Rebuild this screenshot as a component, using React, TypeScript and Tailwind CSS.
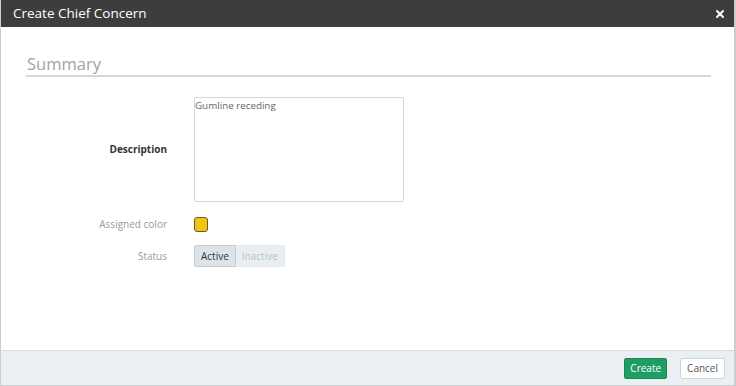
import { X } from "lucide-react";

export default function App() {
  return (
    <div
      className="w-[736px] h-[386px] flex flex-col bg-white border-l border-r-2 border-b border-[#c9cdd0] overflow-hidden"
      style={{ fontFamily: '"Open Sans", "Liberation Sans", sans-serif' }}
    >
      <div className="h-[27px] shrink-0 bg-[#3d3d3d] flex items-center justify-between pl-[12px] pr-[8px]">
        <span className="text-white text-[13.5px] leading-none">Create Chief Concern</span>
        <X className="w-[12px] h-[12px] text-white" strokeWidth={4} />
      </div>

      <div className="flex-1 px-[25px] pt-[27px]">
        <div className="border-b-2 border-[#d6d6d6] pb-[1px] w-[685px]">
          <h2 className="text-[#a3a3a3] text-[16.5px] leading-[20px] pl-[1px]">Summary</h2>
        </div>

        <div className="mt-[20px] flex flex-col">
          <div className="flex items-center">
            <label className="w-[141px] text-right text-[10px] font-bold text-[#333]">Description</label>
            <div className="ml-[27px] w-[210px] h-[105px] border border-[#d4d8da] rounded-[2px] px-0 pt-[2px] text-[9.8px] leading-[12px] text-[#666]">
              Gumline receding
            </div>
          </div>

          <div className="flex items-center mt-[15px]">
            <label className="w-[141px] text-right text-[10px] text-[#999]">Assigned color</label>
            <div className="ml-[27px] w-[14px] h-[15px] rounded-[3px] bg-[#f1c40f] border border-[#6b5a2a]" />
          </div>

          <div className="flex items-center mt-[13px]">
            <label className="w-[141px] text-right text-[10px] text-[#999]">Status</label>
            <div className="ml-[27px] flex h-[22px] text-[10px]">
              <span className="px-[6px] flex items-center bg-[#dbe4ea] border border-[#c4ced5] rounded-l-[2px] text-[#333]">Active</span>
              <span className="px-[6px] flex items-center bg-[#e9eff1] border border-l-0 border-[#e2e8ea] rounded-r-[2px] text-[#b8bfc3]">Inactive</span>
            </div>
          </div>
        </div>
      </div>

      <div className="h-[35px] shrink-0 bg-[#e9eff2] border-t border-[#d5dde1] flex items-center justify-end gap-[13px] pr-[9px]">
        <button className="h-[21px] px-[5px] bg-[#1f9d64] text-white text-[10px] rounded-[2px] border border-[#188955]">Create</button>
        <button className="h-[21px] px-[6px] bg-white text-[#555] text-[10px] rounded-[2px] border border-[#cfd6da]">Cancel</button>
      </div>
    </div>
  );
}
